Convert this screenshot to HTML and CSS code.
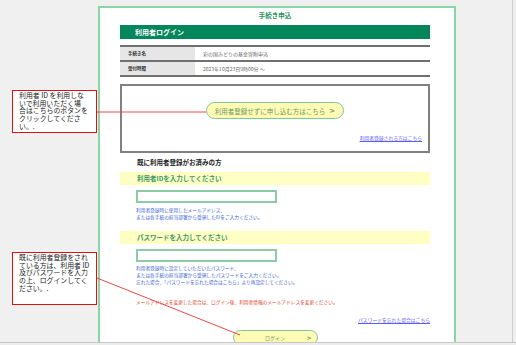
FILE: index.html
```html
<!DOCTYPE html>
<html lang="ja">
<head>
<meta charset="utf-8">
<link rel="stylesheet" href="styles.css">
</head>
<body>
<div class="page">
  <div class="panel">
    <div class="title">手続き申込</div>
    <div class="bar">利用者ログイン</div>
    <div class="info">
      <div class="row"><div class="lab">手続き名</div><div class="val">彩の国みどりの基金寄附申込</div></div>
      <div class="row"><div class="lab">受付時間</div><div class="val">2023年10月23日9時00分 ～</div></div>
    </div>
    <div class="guest">
      <div class="pill guest-btn"><span>利用者登録せずに申し込む方はこちら</span><span class="chev">&gt;</span></div>
      <div class="link-row"><a class="link">利用者登録される方はこちら</a></div>
    </div>
    <div class="heading">既に利用者登録がお済みの方</div>
    <div class="ybar">利用者IDを入力してください</div>
    <div class="field"></div>
    <div class="help">利用者登録時に使用したメールアドレス、<br>または各手続の担当部署から受領したIDをご入力ください。</div>
    <div class="ybar ybar2">パスワードを入力してください</div>
    <div class="field"></div>
    <div class="help help2">利用者登録時に設定していただいたパスワード、<br>または各手続の担当部署から受領したパスワードをご入力ください。<br>忘れた場合、「パスワードを忘れた場合はこちら」より再設定してください。</div>
    <div class="warn">メールアドレスを変更した場合は、ログイン後、利用者情報のメールアドレスを変更ください。</div>
    <div class="link-row link-row2"><a class="link">パスワードを忘れた場合はこちら</a></div>
    <div class="pill login-btn"><span>ログイン</span><span class="chev">&gt;</span></div>
  </div>
  <svg class="lines" width="516" height="345" viewBox="0 0 516 345">
    <line x1="97" y1="112" x2="206" y2="112" stroke="#f04848" stroke-width="1"/>
    <line x1="97" y1="278" x2="240" y2="335" stroke="#f04848" stroke-width="1"/>
  </svg>
  <div class="callout callout1">
    <div class="cl">利用者 ID を利用しな</div>
    <div class="cl">いで利用いただく場</div>
    <div class="cl">合はこちらのボタンを</div>
    <div class="cl">クリックしてくださ</div>
    <div class="cl">い。.</div>
  </div>
  <div class="callout callout2">
    <div class="cl">既に利用者登録をされ</div>
    <div class="cl">ている方は、利用者 ID</div>
    <div class="cl">及びパスワードを入力</div>
    <div class="cl">の上、ログインしてく</div>
    <div class="cl">ださい。.</div>
  </div>
</div>
<div class="bottom"></div>
</body>
</html>
```
FILE: styles.css
```css
html, body {
  margin: 0;
  padding: 0;
  background: #f0f0f0;
  font-family: "Noto Sans CJK JP", "Noto Sans", sans-serif;
}
.page {
  position: relative;
  width: 512px;
  height: 342px;
  overflow: hidden;
  border-right: 1px solid #cfcfcf;
}
.panel {
  margin: 6px 0 0 98px;
  width: 310px;
  height: 400px;
  padding: 0 24px 0 20px;
  background: #fff;
  border: 2px solid #86d6a6;
}
.title {
  height: 14px;
  line-height: 14px;
  font-size: 6.5px;
  font-weight: bold;
  color: #2f8f5f;
  text-align: center;
  margin-bottom: 3px;
}
.bar {
  height: 14px;
  line-height: 14px;
  background: #03865a;
  color: #fff;
  font-size: 7px;
  font-weight: bold;
  padding-left: 15px;
}
.info {
  margin-top: 6px;
  border-top: 2px solid #707070;
}
.row {
  display: flex;
  height: 13px;
  border-bottom: 2px solid #707070;
}
.lab {
  width: 67px;
  padding-left: 8px;
  background: #e6e6e6;
  font-size: 4.5px;
  font-weight: bold;
  line-height: 13px;
  color: #333;
}
.val {
  padding-left: 8px;
  font-size: 5px;
  line-height: 13px;
  color: #666;
}
.guest {
  margin-top: 7px;
  height: 65px;
  border: 2px solid #808080;
  display: flex;
  flex-direction: column;
  align-items: center;
}
.pill {
  box-sizing: border-box;
  display: flex;
  align-items: center;
  justify-content: center;
  background: #fffbb4;
  border: 1.5px solid #7cc69a;
  color: #6f9a5f;
}
.guest-btn {
  margin-top: 16px;
  width: 138px;
  height: 17px;
  border-radius: 9px;
  font-size: 6.5px;
  gap: 4px;
}
.chev {
  font-family: "DejaVu Sans", sans-serif;
  font-weight: bold;
  font-size: 7px;
}
.link-row {
  align-self: stretch;
  display: flex;
  justify-content: flex-end;
  height: 7px;
  line-height: 7px;
}
.guest .link-row {
  margin-top: 15px;
  padding-right: 6px;
}
.link {
  font-size: 4.8px;
  color: #5a5aff;
  text-decoration: underline;
}
.heading {
  margin-top: 4px;
  height: 10px;
  line-height: 10px;
  padding-left: 17px;
  font-size: 6.5px;
  font-weight: bold;
  color: #222;
}
.ybar {
  margin-top: 5px;
  height: 13px;
  line-height: 13px;
  background: #ffffc4;
  padding-left: 17px;
  font-size: 6.5px;
  font-weight: bold;
  color: #3d9a6a;
}
.ybar2 {
  margin-top: 10px;
}
.field {
  box-sizing: border-box;
  margin: 5px 0 0 16px;
  width: 141px;
  height: 13px;
  border: 2px solid #8ccaa9;
  background: #fff;
}
.help {
  margin: 4px 0 0 16px;
  font-size: 4.7px;
  line-height: 7px;
  color: #3a5fcf;
  white-space: nowrap;
}
.help2 {
  margin-top: 3px;
}
.warn {
  margin: 13px 0 0 16px;
  font-size: 4.7px;
  line-height: 7px;
  color: #e2472a;
  white-space: nowrap;
}
.link-row2 {
  margin-top: 10px;
}
.login-btn {
  margin: 7px auto 0;
  width: 85px;
  height: 15px;
  border-radius: 8px;
  font-size: 5px;
  position: relative;
}
.login-btn .chev {
  position: absolute;
  right: 5px;
  font-size: 6px;
}
.lines {
  position: absolute;
  left: 0;
  top: 0;
  pointer-events: none;
}
.callout {
  position: absolute;
  left: 12px;
  width: 85px;
  box-sizing: border-box;
  background: #fff;
  border: 1.5px solid #e01010;
  padding: 1px 0 0 6px;
  font-size: 6.9px;
  color: #222;
  white-space: nowrap;
}
.cl {
  height: 7.7px;
  line-height: 7.7px;
}
.callout1 {
  top: 90px;
  height: 43px;
}
.callout2 {
  top: 252px;
  height: 53px;
  padding-top: 1px;
}
.bottom {
  height: 3px;
  border-top: 1px solid #c8c8c8;
  background: #ececec;
}
```
